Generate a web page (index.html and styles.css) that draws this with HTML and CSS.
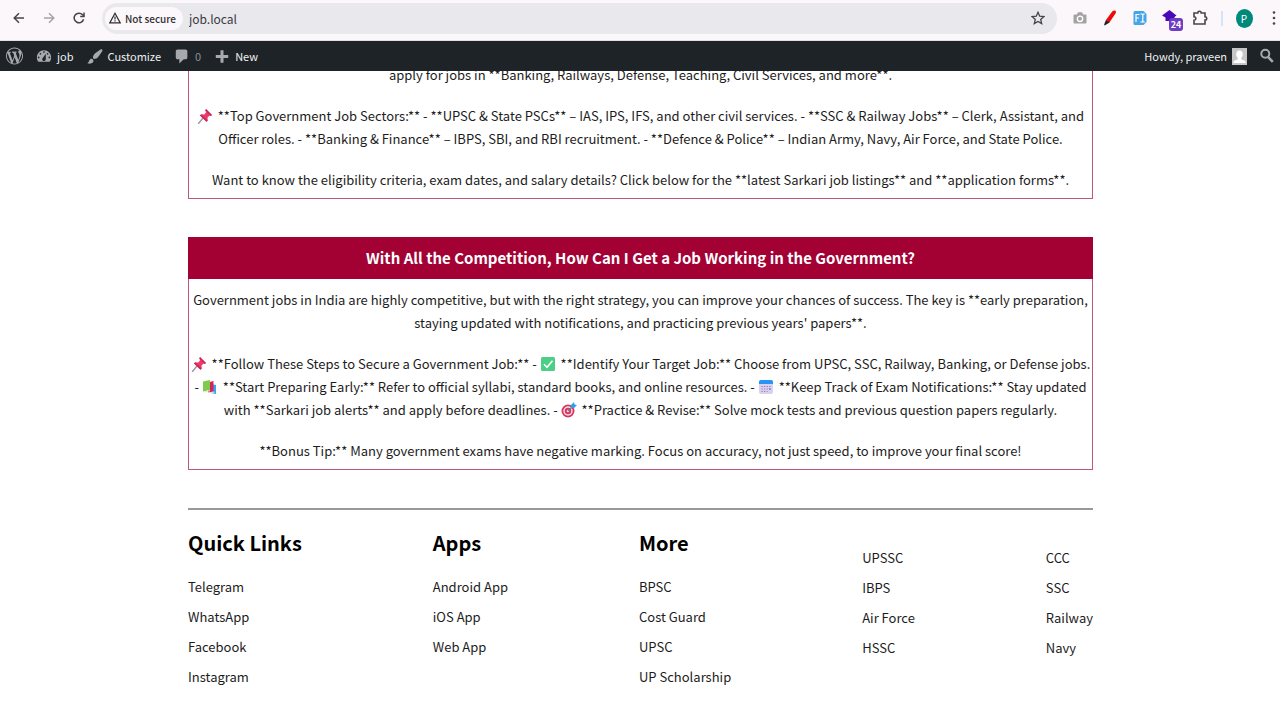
FILE: index.html
```html
<!DOCTYPE html>
<html lang="en">
<head>
    <meta charset="UTF-8">
    <meta name="viewport" content="width=device-width, initial-scale=1.0">
    <title>job</title>
    <link rel="stylesheet" href="styles.css">
</head>
<body>

<!-- Emoji used inside the text -->
<svg class="sprite" aria-hidden="true">
    <symbol id="pin" viewBox="0 0 16 16">
        <path d="M6 10 1.500 15.500" stroke="#9a9aa8" stroke-width="1.400" stroke-linecap="round"/>
        <path d="M9 1 15 7l-1.500 1-1-.4-2 2.200.3 2.700-1.300 1.200L3 7.500l1.200-1.300 3 .2 2-2.200L8.300 2.500z" fill="#f0386b"/>
        <path d="M9 1 15 7l-1.500 1L8.300 2.500zM3 7.500l1.200-1.300 6.500 6.300-1.200 1.200z" fill="#c92a58"/>
    </symbol>
    <symbol id="check" viewBox="0 0 16 16">
        <rect x="1" y="1" width="14" height="14" rx="1.500" fill="#4bcf87"/>
        <path d="m4 8.300 3 3 5.500-6.500" fill="none" stroke="#fff" stroke-width="1.500"/>
    </symbol>
    <symbol id="books" viewBox="0 0 16 16">
        <path d="m9 5 5 1v9l-5-1z" fill="#35a5ec"/>
        <path d="M6 3.500 11.500 2v10.500L6 13.500z" fill="#d8225a"/>
        <path d="M6 13.500 11.500 12.500l1.500 1-6 1z" fill="#e8d7ee"/>
        <path d="M1 2.500 8 1v10l-7 1.500z" fill="#7ccb4b"/>
        <path d="m1 12.500 7-1.500v1.200L2 13.500z" fill="#dfeccf"/>
    </symbol>
    <symbol id="calendar" viewBox="0 0 16 16">
        <rect x="1" y="1" width="14" height="14" rx="2" fill="#ddd0ef"/>
        <path d="M3 1h10a2 2 0 0 1 2 2v2H1V3a2 2 0 0 1 2-2z" fill="#2a94f4"/>
        <path d="M3.500 7.500h9M3.500 10h9M3.500 12.500h6" stroke="#8a78b2" stroke-width="1.200" stroke-dasharray="1.200 1.400"/>
        <path d="M11 9.300h1.500v1.500H11z" fill="#2a94f4"/>
    </symbol>
    <symbol id="target" viewBox="0 0 16 16">
        <circle cx="7" cy="9" r="6.500" fill="#d9365f"/>
        <circle cx="7" cy="9" r="4.700" fill="#f3dbe6"/>
        <circle cx="7" cy="9" r="3.200" fill="#d9365f"/>
        <circle cx="7" cy="9" r="1.300" fill="#f3dbe6"/>
        <path d="m7 9 5-5" stroke="#6c7a96" stroke-width="1.200"/>
        <path d="M10 6V3l3-3 .5 2.500L16 3l-3 3z" fill="#2ea0ea"/>
    </symbol>
</svg>

<header class="top">
    <div class="browser-bar">
        <button class="tool" aria-label="Back"><svg width="16" height="16" viewBox="0 0 16 16" fill="none" stroke="#45454c" stroke-width="1.500"><path d="M13 8H3.500M8 3.200 3.200 8 8 12.800"/></svg></button>
        <button class="tool" aria-label="Forward"><svg width="16" height="16" viewBox="0 0 16 16" fill="none" stroke="#a5a3a8" stroke-width="1.500"><path d="M3 8h9.500M8 3.200 12.800 8 8 12.800"/></svg></button>
        <button class="tool" aria-label="Reload"><svg width="16" height="16" viewBox="0 0 16 16" fill="none" stroke="#45454c" stroke-width="1.500"><path d="M12.600 9.200A4.800 4.800 0 1 1 11.600 4.800L13 6.300"/><path d="M13 2.500v4H9.200"/></svg></button>
        <div class="address">
            <button class="security">
                <svg width="12" height="12" viewBox="0 0 12 12" fill="none" stroke="#2f2f33" stroke-width="1.200"><path d="M6 1.300 11.200 10.900H.8z"/><path d="M6 4.500v3M6 8.300v1.200"/></svg>
                Not secure
            </button>
            <input class="url" type="text" value="job.local" aria-label="Address">
            <button class="star" aria-label="Bookmark"><svg width="14" height="14" viewBox="0 0 14 14" fill="none" stroke="#45454c" stroke-width="1.300"><path d="m7 1.300 1.700 3.900 4.200.4-3.200 2.800 1 4.200L7 10.400l-3.700 2.200 1-4.200L1.100 5.600l4.200-.4z"/></svg></button>
        </div>
        <button class="tool" aria-label="Screenshot"><svg width="14" height="14" viewBox="0 0 14 14"><path d="M1.500 3.500h2.300L5 1.300h4l1.200 2.200h2.300q1 0 1 1v7q0 1-1 1h-11q-1 0-1-1v-7q0-1 1-1z" fill="#a3a3a3"/><circle cx="7" cy="7.800" r="2.700" fill="none" stroke="#fff" stroke-width="1.400"/></svg></button>
        <button class="tool" aria-label="Highlighter"><svg width="14" height="16" viewBox="0 0 14 16"><path d="M9.200 1.500Q11 0 12.500.8q.8 1 .3 2.200l-6.500 9.800-3.500-2.500z" fill="#ec0b0b"/><path d="m3 10 3.500 2.600-4.800 3q-.8-.5-.4-1.500z" fill="#222"/></svg></button>
        <button class="tool" aria-label="Font finder"><svg width="14" height="16" viewBox="0 0 14 16"><path d="M2 1h8.500L13.500 4v8l-3 3H2q-1.500 0-1.500-1.500v-11Q.5 1 2 1z" fill="#45a5e6"/><path d="M3 12V4.500h3.500M3 8h3M7.500 4H9l.8.700.7-.7h1.300M7.500 12H9l.8-.7.7.7h1.300M9.800 4.500v7" fill="none" stroke="#fff" stroke-width="1.200"/></svg></button>
        <button class="tool" aria-label="Page inspector"><svg width="16" height="16" viewBox="0 0 16 16"><path d="m7.500 0 7 5.500-2 1.500v4h-9V7.500L0 5.500z" fill="#4909b8"/></svg><span class="badge">24</span></button>
        <button class="tool" aria-label="Extensions"><svg width="16" height="16" viewBox="0 0 16 16" fill="none" stroke="#45454c" stroke-width="1.600"><path d="M2 3h3.800a1.700 1.700 0 0 1 3.400 0H13v3.700a1.700 1.700 0 0 1 0 3.400V14H2v-3.700a1.800 1.800 0 0 0 0-3.600z"/></svg></button>
        <span class="divider"></span>
        <button class="tool" aria-label="Profile"><span class="profile">P</span></button>
        <button class="menu" aria-label="Menu"><svg width="4" height="16" viewBox="0 0 4 16" fill="#45454c"><circle cx="2" cy="2.500" r="1.300"/><circle cx="2" cy="8" r="1.300"/><circle cx="2" cy="13.500" r="1.300"/></svg></button>
    </div>

    <nav class="admin-bar">
        <a href="#" aria-label="WordPress"><svg width="17" height="18" viewBox="0 0 20 20"><path d="M20 10c0-5.510-4.490-10-10-10C4.480 0 0 4.490 0 10c0 5.520 4.480 10 10 10 5.510 0 10-4.480 10-10zM7.780 15.370L4.370 6.220c.55-.02 1.170-.08 1.170-.08.5-.06.44-1.130-.06-1.110 0 0-1.450.11-2.370.11-.18 0-.37 0-.58-.01C4.120 2.690 6.870 1.110 10 1.110c2.330 0 4.450.87 6.050 2.340-.68-.11-1.650.39-1.650 1.580 0 .74.45 1.360.9 2.100.35.61.55 1.360.55 2.460 0 1.490-1.400 5-1.400 5l-3.030-8.370c.54-.02.82-.17.82-.17.5-.05.44-1.250-.06-1.220 0 0-1.440.12-2.380.12-.87 0-2.330-.12-2.330-.12-.5-.03-.56 1.200-.06 1.220l.92.08 1.260 3.410zM17.410 10c.24-.64.74-1.870.43-4.250.7 1.290 1.050 2.710 1.050 4.250 0 3.290-1.730 6.240-4.400 7.780.97-2.590 1.940-5.200 2.920-7.780zM6.100 18.090C3.120 16.650 1.110 13.530 1.110 10c0-1.300.23-2.480.72-3.590C3.250 10.300 4.670 14.200 6.100 18.090zm4.030-6.630l2.580 6.980c-.86.29-1.760.45-2.710.45-.79 0-1.570-.11-2.290-.33.81-2.380 1.620-4.740 2.420-7.100z"/></svg></a>
        <a href="#"><svg width="16" height="17" viewBox="1 1 18 18"><path fill-rule="evenodd" d="M3.760 16h12.480c1.100-1.370 1.760-3.110 1.760-5 0-4.420-3.580-8-8-8s-8 3.580-8 8c0 1.890.66 3.630 1.760 5zM10 4c.55 0 1 .45 1 1s-.45 1-1 1-1-.45-1-1 .45-1 1-1zM6 6c.55 0 1 .45 1 1s-.45 1-1 1-1-.45-1-1 .45-1 1-1zm8 0c.55 0 1 .45 1 1s-.45 1-1 1-1-.45-1-1 .45-1 1-1zm-5.370 5.550L12 7v6c0 1.100-.9 2-2 2s-2-.9-2-2c0-.57.24-1.080.63-1.450zM4 10c.55 0 1 .45 1 1s-.45 1-1 1-1-.45-1-1 .45-1 1-1zm12 0c.55 0 1 .45 1 1s-.45 1-1 1-1-.45-1-1 .45-1 1-1z"/></svg>job</a>
        <a href="#"><svg width="16" height="17" viewBox="1 1 18 18"><path d="M18.330 3.570s.27-.8-.31-1.360c-.53-.52-1.220-.24-1.220-.24-.61.3-5.760 3.470-7.670 5.570-.86.96-2.060 3.790-1.090 4.820.92.98 3.960-.17 4.790-1 2.060-2.060 5.210-7.170 5.500-7.790zM1.400 17.650c2.370-1.560 1.460-3.410 3.230-4.640.93-.65 2.220-.62 3.080.29.63.67.8 2.570-.16 3.460-1.570 1.450-4 1.550-6.150.89z"/></svg>Customize</a>
        <a href="#" class="comments"><svg width="16" height="17" viewBox="1 1 18 18"><path d="M5 2h9c1.100 0 2 .9 2 2v7c0 1.100-.9 2-2 2h-2l-5 5v-5H5c-1.100 0-2-.9-2-2V4c0-1.100.9-2 2-2z"/></svg>0</a>
        <a href="#"><svg width="16" height="17" viewBox="1 1 18 18"><path d="M8.300 3h3.400v5.300H17v3.400h-5.300V17H8.300v-5.300H3V8.300h5.300z"/></svg>New</a>
        <a href="#" class="account">Howdy, praveen
            <svg width="15" height="17" viewBox="0 0 15 17"><path fill="#c6c6c6" d="M0 0h15v17H0z"/><path fill="#fff" d="M7.500 2.500c2 0 3.300 1.500 3.300 3.700 0 1.600-.7 3-1.600 3.700v1.300l3.600 1.600q.7.400.7 1.200v1H1.500v-1q0-.8.700-1.200l3.600-1.600V9.900C4.900 9.200 4.200 7.800 4.200 6.200c0-2.200 1.300-3.700 3.300-3.700z"/></svg>
        </a>
        <a href="#" aria-label="Search"><svg width="14" height="16" viewBox="0 0 14 16" fill="none" stroke="#a7aaad"><circle cx="5.300" cy="5.800" r="4" stroke-width="2"/><path d="m8.200 9.200 4.600 4.600" stroke-width="2.600"/></svg></a>
    </nav>
</header>

<main class="content">
    <section class="box">
        <div class="box-text">
            <p>apply for jobs in **Banking, Railways, Defense, Teaching, Civil Services, and more**.</p>
            <p><svg class="emoji"><use href="#pin"/></svg> **Top Government Job Sectors:** - **UPSC &amp; State PSCs** – IAS, IPS, IFS, and other civil services. - **SSC &amp; Railway Jobs** – Clerk, Assistant, and<br>
            Officer roles. - **Banking &amp; Finance** – IBPS, SBI, and RBI recruitment. - **Defence &amp; Police** – Indian Army, Navy, Air Force, and State Police.</p>
            <p>Want to know the eligibility criteria, exam dates, and salary details? Click below for the **latest Sarkari job listings** and **application forms**.</p>
        </div>
    </section>

    <section class="box">
        <h2>With All the Competition, How Can I Get a Job Working in the Government?</h2>
        <div class="box-text">
            <p>Government jobs in India are highly competitive, but with the right strategy, you can improve your chances of success. The key is **early preparation,<br>
            staying updated with notifications, and practicing previous years' papers**.</p>
            <p><svg class="emoji"><use href="#pin"/></svg> **Follow These Steps to Secure a Government Job:** - <svg class="emoji"><use href="#check"/></svg> **Identify Your Target Job:** Choose from UPSC, SSC, Railway, Banking, or Defense jobs.<br>
            - <svg class="emoji"><use href="#books"/></svg> **Start Preparing Early:** Refer to official syllabi, standard books, and online resources. - <svg class="emoji"><use href="#calendar"/></svg> **Keep Track of Exam Notifications:** Stay updated<br>
            with **Sarkari job alerts** and apply before deadlines. - <svg class="emoji"><use href="#target"/></svg> **Practice &amp; Revise:** Solve mock tests and previous question papers regularly.</p>
            <p>**Bonus Tip:** Many government exams have negative marking. Focus on accuracy, not just speed, to improve your final score!</p>
        </div>
    </section>

    <footer class="footer">
        <div>
            <h3>Quick Links</h3>
            <ul>
                <li><a href="#">Telegram</a></li>
                <li><a href="#">WhatsApp</a></li>
                <li><a href="#">Facebook</a></li>
                <li><a href="#">Instagram</a></li>
            </ul>
        </div>
        <div>
            <h3>Apps</h3>
            <ul>
                <li><a href="#">Android App</a></li>
                <li><a href="#">iOS App</a></li>
                <li><a href="#">Web App</a></li>
            </ul>
        </div>
        <div>
            <h3>More</h3>
            <ul>
                <li><a href="#">BPSC</a></li>
                <li><a href="#">Cost Guard</a></li>
                <li><a href="#">UPSC</a></li>
                <li><a href="#">UP Scholarship</a></li>
            </ul>
        </div>
        <ul class="untitled">
            <li><a href="#">UPSSC</a></li>
            <li><a href="#">IBPS</a></li>
            <li><a href="#">Air Force</a></li>
            <li><a href="#">HSSC</a></li>
        </ul>
        <ul class="untitled">
            <li><a href="#">CCC</a></li>
            <li><a href="#">SSC</a></li>
            <li><a href="#">Railway</a></li>
            <li><a href="#">Navy</a></li>
        </ul>
    </footer>
</main>

</body>
</html>
```
FILE: styles.css
```css
* {
    box-sizing: border-box;
}
body {
    margin: 0;
    font-family: "Noto Sans CJK JP", "Noto Sans", sans-serif;
    font-size: 13px;
    color: #1c1c1c;
    background: #fff;
}
a {
    color: inherit;
    text-decoration: none;
}
button {
    padding: 0;
    border: none;
    background: none;
    font-family: inherit;
    cursor: pointer;
}
.sprite {
    display: none;
}

/* Browser bar */
.top {
    position: fixed;
    top: 0;
    left: 0;
    right: 0;
    z-index: 10;
}
.browser-bar {
    display: flex;
    align-items: center;
    height: 41px;
    padding: 0 0 4px 4px;
    background: #fcf7fa;
    border-bottom: 1px solid #e3dfe3;
}
.tool {
    position: relative;
    display: flex;
    align-items: center;
    justify-content: center;
    width: 30px;
    height: 30px;
}
.address {
    display: flex;
    flex: 1;
    align-items: center;
    height: 31px;
    margin: 0 8px;
    padding: 0 12px 0 3px;
    border-radius: 16px;
    background: #e9e8ed;
}
.security {
    display: flex;
    align-items: center;
    gap: 4px;
    height: 23px;
    padding: 0 7px 0 4px;
    border-radius: 12px;
    background: #fcf7fa;
    font-size: 10px;
    font-weight: 500;
    color: #2f2f33;
}
.url {
    flex: 1;
    min-width: 0;
    padding: 0 6px;
    border: none;
    outline: none;
    background: none;
    font-family: inherit;
    font-size: 12px;
    color: #3a3a40;
}
.star {
    display: flex;
}
.badge {
    position: absolute;
    left: 14px;
    top: 15px;
    width: 14px;
    border-radius: 3px;
    background: #6f3cc4;
    color: #fff;
    font-size: 9px;
    font-weight: 600;
    line-height: 13px;
}
.divider {
    width: 2px;
    height: 15px;
    margin: 0 6px;
    background: #d5e3fb;
}
.profile {
    width: 17px;
    height: 19px;
    border-radius: 50%;
    background: #00897b;
    color: #fff;
    font-size: 10px;
    line-height: 19px;
}
.menu {
    display: flex;
    margin: 0 4px 0 13px;
}

/* WordPress admin bar */
.admin-bar {
    display: flex;
    align-items: center;
    gap: 13px;
    height: 30px;
    padding: 0 6px;
    background: #1d2327;
    color: #f0f0f1;
    font-size: 11px;
    fill: #a7aaad;
}
.admin-bar a {
    display: flex;
    align-items: center;
    gap: 5px;
}
.admin-bar .comments {
    color: #8c8f94;
}
.admin-bar .account {
    margin-left: auto;
}

/* Page */
.content {
    margin: 0 187px 0 188px;
    padding-top: 63px;
}
.box {
    margin-bottom: 38px;
    border: 1px solid #c0577b;
    border-top: none;
    text-align: center;
}
.box h2 {
    margin: 0 -1px;
    background: #a30034;
    color: #fff;
    font-size: 15px;
    line-height: 42px;
}
.box-text {
    padding: 0 0 7px;
}
h2 + .box-text {
    padding-top: 9px;
}
.box p {
    margin: 0 0 18px;
    line-height: 23px;
}
.box p:last-child {
    margin-bottom: 0;
}
.emoji {
    width: 16px;
    height: 16px;
    margin-right: 2px;
    vertical-align: -3px;
}

.footer {
    display: flex;
    justify-content: space-between;
    padding-bottom: 28px;
    border-top: 2px solid #999;
}
.footer h3 {
    margin: 17px 0 13px;
    color: #000;
    font-size: 20px;
    line-height: 32px;
}
.footer ul {
    margin: 0;
    padding: 0;
    list-style: none;
}
.footer li {
    line-height: 30px;
}
.footer .untitled {
    margin-top: 33px;
}
```
